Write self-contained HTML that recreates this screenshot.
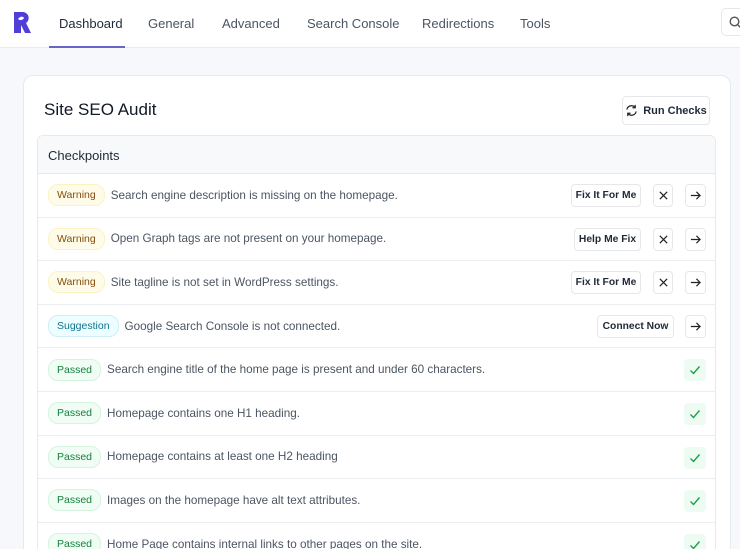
<!DOCTYPE html><html><head><style>
*{box-sizing:border-box;margin:0;padding:0}
html,body{width:740px;height:549px;overflow:hidden}
body{background:#f6f8fb;font-family:"Liberation Sans",sans-serif;position:relative}
.hdr{position:absolute;left:0;top:0;width:740px;height:48px;background:#fff;border-bottom:1px solid #e8ebf0}
.tab{position:absolute;top:16px;font-size:13px;color:#4b5563}
.card{position:absolute;left:23px;top:75px;width:708px;height:500px;background:#fff;border:1px solid #e6e9ef;border-radius:10px}
.tbl{position:absolute;left:37px;top:135px;width:679px;height:430px;border:1px solid #e6e9ef;border-radius:6px;overflow:hidden}
.th{height:38px;background:#f8f9fb;border-bottom:1px solid #e6e9ef;font-size:13px;color:#1f2937;padding:12px 0 0 10px}
.row{height:43.6px;border-bottom:1px solid #eceef2;position:relative;display:flex;align-items:center;padding-left:10px}
.badge{font-size:10.5px;border-radius:10px;padding:4px 8px;margin-right:6px;border:1px solid}
.w{background:#fefce8;color:#854d0e;border-color:#fbf3c4}
.s{background:#ecfeff;color:#0e7490;border-color:#cdeff5}
.p{background:#f0fdf4;color:#15803d;border-color:#d6f3df}
.txt{font-size:11.7px;color:#4b5563}
.btn{position:absolute;top:10px;height:23px;border:1px solid #e5e7eb;border-radius:4px;font-size:10.3px;font-weight:bold;color:#1f2937;display:flex;align-items:center;justify-content:center;background:#fff}
.chk{position:absolute;right:9px;top:11px;width:22px;height:22px;background:#eefbf2;border-radius:4px;display:flex;align-items:center;justify-content:center}
</style></head><body>
<div class="hdr">
<svg style="position:absolute;left:14px;top:12px" width="18" height="21" viewBox="0 0 18 21"><path d="M0 0h9a6 6 0 0 1 3 11l5 10h-6l-4-8v8H0z" fill="#4f3fd6"/><path d="M4 7c2-3 5-3 6-1-1 2-4 3-6 1z" fill="#fff"/></svg>
<div class="tab" style="left:59px;color:#1f2937">Dashboard</div>
<div style="position:absolute;left:49px;top:46px;width:76px;height:2px;background:#6a63c8"></div>
<div class="tab" style="left:148px">General</div>
<div class="tab" style="left:222px">Advanced</div>
<div class="tab" style="left:307px">Search Console</div>
<div class="tab" style="left:422px">Redirections</div>
<div class="tab" style="left:520px">Tools</div>
<div style="position:absolute;left:721px;top:8px;width:30px;height:28px;border:1px solid #e5e7eb;border-radius:5px"><svg style="position:absolute;left:7px;top:7px" width="13" height="13" viewBox="0 0 13 13"><circle cx="5.5" cy="5.5" r="4.3" fill="none" stroke="#555" stroke-width="1.4"/><path d="M8.7 8.7L12 12" stroke="#555" stroke-width="1.4"/></svg></div>
</div>
<div class="card">
<div style="position:absolute;left:20px;top:24px;font-size:17px;color:#111827">Site SEO Audit</div>
<div class="btn" style="left:598px;top:20px;width:88px;height:29px;font-size:11px"><svg width="13" height="13" viewBox="0 0 14 14" style="margin-right:5px"><path d="M2 6a5 5 0 0 1 9-2M12 8a5 5 0 0 1-9 2" fill="none" stroke="#222" stroke-width="1.3"/><path d="M11 1v3H8M3 13v-3h3" fill="none" stroke="#222" stroke-width="1.3"/></svg>Run Checks</div>
</div>
<svg width="0" height="0" style="position:absolute"><defs>
<symbol id="x" viewBox="0 0 12 12"><path d="M2 2l8 8M10 2l-8 8" stroke="#222" stroke-width="1.3"/></symbol>
<symbol id="a" viewBox="0 0 12 12"><path d="M1 6h10M7 2l4 4-4 4" fill="none" stroke="#222" stroke-width="1.3"/></symbol>
<symbol id="c" viewBox="0 0 12 12"><path d="M1.5 6.5l3 3 6-7" fill="none" stroke="#16a34a" stroke-width="1.4"/></symbol>
</defs></svg>
<div class="tbl">
<div class="th">Checkpoints</div>
<div class="row"><span class="badge w">Warning</span><span class="txt">Search engine description is missing on the homepage.</span><div class="btn" style="left:533px;width:70px">Fix It For Me</div><div class="btn" style="left:615px;width:20px"><svg width="11" height="11"><use href="#x"/></svg></div><div class="btn" style="left:647px;width:21px"><svg width="11" height="11"><use href="#a"/></svg></div></div>
<div class="row"><span class="badge w">Warning</span><span class="txt">Open Graph tags are not present on your homepage.</span><div class="btn" style="left:536px;width:67px">Help Me Fix</div><div class="btn" style="left:615px;width:20px"><svg width="11" height="11"><use href="#x"/></svg></div><div class="btn" style="left:647px;width:21px"><svg width="11" height="11"><use href="#a"/></svg></div></div>
<div class="row"><span class="badge w">Warning</span><span class="txt">Site tagline is not set in WordPress settings.</span><div class="btn" style="left:533px;width:70px">Fix It For Me</div><div class="btn" style="left:615px;width:20px"><svg width="11" height="11"><use href="#x"/></svg></div><div class="btn" style="left:647px;width:21px"><svg width="11" height="11"><use href="#a"/></svg></div></div>
<div class="row"><span class="badge s">Suggestion</span><span class="txt">Google Search Console is not connected.</span><div class="btn" style="left:559px;width:77px">Connect Now</div><div class="btn" style="left:647px;width:21px"><svg width="11" height="11"><use href="#a"/></svg></div></div>
<div class="row"><span class="badge p">Passed</span><span class="txt">Search engine title of the home page is present and under 60 characters.</span><div class="chk"><svg width="12" height="12"><use href="#c"/></svg></div></div>
<div class="row"><span class="badge p">Passed</span><span class="txt">Homepage contains one H1 heading.</span><div class="chk"><svg width="12" height="12"><use href="#c"/></svg></div></div>
<div class="row"><span class="badge p">Passed</span><span class="txt">Homepage contains at least one H2 heading</span><div class="chk"><svg width="12" height="12"><use href="#c"/></svg></div></div>
<div class="row"><span class="badge p">Passed</span><span class="txt">Images on the homepage have alt text attributes.</span><div class="chk"><svg width="12" height="12"><use href="#c"/></svg></div></div>
<div class="row"><span class="badge p">Passed</span><span class="txt">Home Page contains internal links to other pages on the site.</span><div class="chk"><svg width="12" height="12"><use href="#c"/></svg></div></div>
</div>
</body></html>
